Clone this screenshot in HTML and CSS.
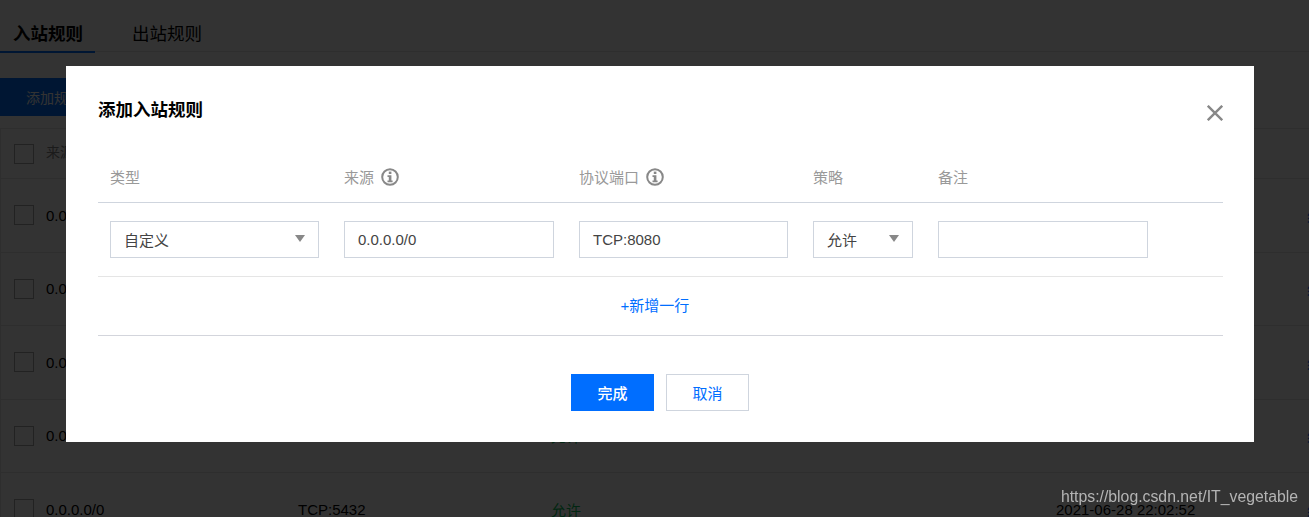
FILE: index.html
```html
<!DOCTYPE html>
<html lang="zh-CN">
<head>
  <meta charset="UTF-8">
  <title>添加入站规则</title>
  <link rel="stylesheet" href="styles.css">
</head>
<body>
<div class="page">
  <div class="tabs">
    <div class="tab active">入站规则</div>
    <div class="tab">出站规则</div>
  </div>
  <div class="toolbar">
    <button class="add-btn">添加规则</button>
  </div>
  <div class="table">
    <div class="row head">
      <span class="check"></span>
      <span class="cell-source">来源</span>
      <span class="cell-port">协议端口</span>
      <span class="cell-policy">策略</span>
      <span class="cell-time">修改时间</span>
    </div>
    <div class="row">
      <span class="check"></span>
      <span class="cell-source">0.0.0.0/0</span>
      <span class="cell-port">TCP:22</span>
      <span class="cell-policy allow">允许</span>
      <span class="cell-time">2021-06-28 22:02:52</span>
      <span class="cell-op">编辑</span>
    </div>
    <div class="row">
      <span class="check"></span>
      <span class="cell-source">0.0.0.0/0</span>
      <span class="cell-port">TCP:80</span>
      <span class="cell-policy allow">允许</span>
      <span class="cell-time">2021-06-28 22:02:52</span>
      <span class="cell-op">编辑</span>
    </div>
    <div class="row">
      <span class="check"></span>
      <span class="cell-source">0.0.0.0/0</span>
      <span class="cell-port">TCP:443</span>
      <span class="cell-policy allow">允许</span>
      <span class="cell-time">2021-06-28 22:02:52</span>
      <span class="cell-op">编辑</span>
    </div>
    <div class="row">
      <span class="check"></span>
      <span class="cell-source">0.0.0.0/0</span>
      <span class="cell-port">TCP:3306</span>
      <span class="cell-policy allow">允许</span>
      <span class="cell-time">2021-06-28 22:02:52</span>
      <span class="cell-op">编辑</span>
    </div>
    <div class="row">
      <span class="check"></span>
      <span class="cell-source">0.0.0.0/0</span>
      <span class="cell-port">TCP:5432</span>
      <span class="cell-policy allow">允许</span>
      <span class="cell-time">2021-06-28 22:02:52</span>
      <span class="cell-op">编辑</span>
    </div>
  </div>
</div>

<div class="overlay">
  <div class="dialog">
    <div class="dialog-head">
      <h3 class="dialog-title">添加入站规则</h3>
      <svg class="close" width="16" height="16" viewBox="0 0 16 16"><path d="M.8.8L15.2 15.2M15.2.8L.8 15.2" stroke="#888" stroke-width="2.4" fill="none"/></svg>
    </div>
    <div class="form-grid form-head">
      <div>类型</div>
      <div class="with-icon">来源
        <svg class="info" width="18" height="18" viewBox="0 0 18 18"><circle cx="9" cy="9" r="7.8" stroke="#888" stroke-width="2" fill="none"/><rect x="7.8" y="3.6" width="2.6" height="2.4" fill="#888"/><path d="M6.5 7.3H10.4V12.4H11.6V14.2H6.5V12.4H7.8V9.1H6.5Z" fill="#888"/></svg>
      </div>
      <div class="with-icon">协议端口
        <svg class="info" width="18" height="18" viewBox="0 0 18 18"><circle cx="9" cy="9" r="7.8" stroke="#888" stroke-width="2" fill="none"/><rect x="7.8" y="3.6" width="2.6" height="2.4" fill="#888"/><path d="M6.5 7.3H10.4V12.4H11.6V14.2H6.5V12.4H7.8V9.1H6.5Z" fill="#888"/></svg>
      </div>
      <div>策略</div>
      <div>备注</div>
    </div>
    <div class="form-grid form-row">
      <div class="field select narrow">自定义</div>
      <div class="field wide">0.0.0.0/0</div>
      <div class="field narrow">TCP:8080</div>
      <div class="field select small">允许</div>
      <div class="field wide"></div>
    </div>
    <div class="add-row"><a class="add-link">+新增一行</a></div>
    <div class="dialog-foot">
      <button class="btn primary">完成</button>
      <button class="btn">取消</button>
    </div>
  </div>
</div>

<div class="watermark">https://blog.csdn.net/IT_vegetable</div>
</body>
</html>
```

FILE: styles.css
```css
html, body {
  height: 100%;
}
body {
  margin: 0;
  overflow: hidden;
  background: #fff;
  color: #000;
  font-family: "Liberation Sans", "Noto Sans CJK SC", sans-serif;
  font-size: 15px;
}
.page {
  height: 517px;
  overflow: hidden;
}
.tabs {
  display: flex;
  height: 52px;
  box-sizing: border-box;
  border-bottom: 1px solid #e5e5e5;
}
.tab {
  height: 53px;
  box-sizing: border-box;
  padding: 19px 12px 0 13px;
  margin-right: 24px;
  font-size: 17.5px;
  line-height: 30px;
}
.tab.active {
  font-weight: bold;
  border-bottom: 2px solid #006eff;
}
.toolbar {
  padding-top: 26px;
  height: 50px;
}
.add-btn {
  display: block;
  width: 108px;
  height: 38px;
  padding: 0;
  border: 0;
  background: #006eff;
  color: #fff;
  font: inherit;
  font-size: 14px;
}
.table {
  border: 1px solid #e5e5e5;
  border-width: 1px 0 0 1px;
}
.row {
  position: relative;
  display: flex;
  align-items: center;
  height: 73.5px;
  box-sizing: border-box;
  padding-left: 13px;
  border-bottom: 1px solid #e5e5e5;
}
.row.head {
  height: 50px;
  color: #888;
  font-size: 14px;
  line-height: 16px;
}
.row.head span:not(.check) {
  margin-top: -3px;
}
.check {
  flex: none;
  width: 20px;
  height: 20px;
  box-sizing: border-box;
  margin-right: 12px;
  border: 1px solid #aaa;
  background: #fff;
}
.cell-source { width: 252px; flex: none; }
.cell-port { width: 253px; flex: none; }
.cell-policy { width: 505px; flex: none; }
.cell-time { width: 251px; flex: none; }
.cell-op { flex: none; color: #006eff; white-space: nowrap; }
.allow { color: #0abf5b; }

.overlay {
  position: fixed;
  left: 0;
  top: 0;
  right: 0;
  bottom: 0;
  padding: 66px 55px 0 66px;
  background: rgba(0, 0, 0, .8);
}
.dialog {
  height: 376px;
  box-sizing: border-box;
  padding: 0 31px 0 32px;
  background: #fff;
}
.dialog-head {
  display: flex;
  justify-content: space-between;
  height: 84px;
}
.dialog-title {
  margin: 31px 0 0;
  font-size: 17.5px;
  line-height: 26px;
  font-weight: bold;
}
.close {
  margin-top: 39px;
}
.form-grid {
  display: grid;
  grid-template-columns: 234px 235px 234px 125px 1fr;
  padding-left: 12px;
}
.form-head {
  align-items: center;
  box-sizing: border-box;
  height: 53px;
  border-bottom: 1px solid #cfd5de;
  color: #999;
}
.with-icon {
  display: flex;
  align-items: center;
  gap: 7px;
}
.info {
  margin-top: 1px;
}
.form-row {
  box-sizing: border-box;
  height: 74px;
  padding-top: 18px;
  border-bottom: 1px solid #e5e5e5;
}
.field {
  display: flex;
  align-items: center;
  justify-content: space-between;
  box-sizing: border-box;
  height: 37px;
  padding: 0 13px;
  border: 1px solid #cfd5de;
  color: #444;
}
.wide { width: 210px; }
.narrow { width: 209px; }
.small { width: 100px; }
.select::after {
  content: "";
  width: 0;
  height: 0;
  margin-top: -3px;
  border-style: solid;
  border-width: 7px 5px 0;
  border-color: #888 transparent transparent;
}
.add-row {
  height: 58px;
  padding-right: 11px;
  border-bottom: 1px solid #d3d5dc;
  line-height: 58px;
  text-align: center;
}
.add-link {
  color: #006eff;
}
.dialog-foot {
  display: flex;
  justify-content: center;
  gap: 12px;
  padding-top: 38px;
  padding-right: 1px;
}
.btn {
  width: 83px;
  height: 37px;
  box-sizing: border-box;
  padding: 0;
  border: 1px solid #cfd5de;
  background: #fff;
  color: #006eff;
  font: inherit;
}
.btn.primary {
  border-color: #006eff;
  background: #006eff;
  color: #fff;
  font-weight: 500;
}
.watermark {
  position: fixed;
  right: 11px;
  bottom: 8px;
  color: #b4b4b4;
  font-size: 15.8px;
  line-height: 24px;
}
```
